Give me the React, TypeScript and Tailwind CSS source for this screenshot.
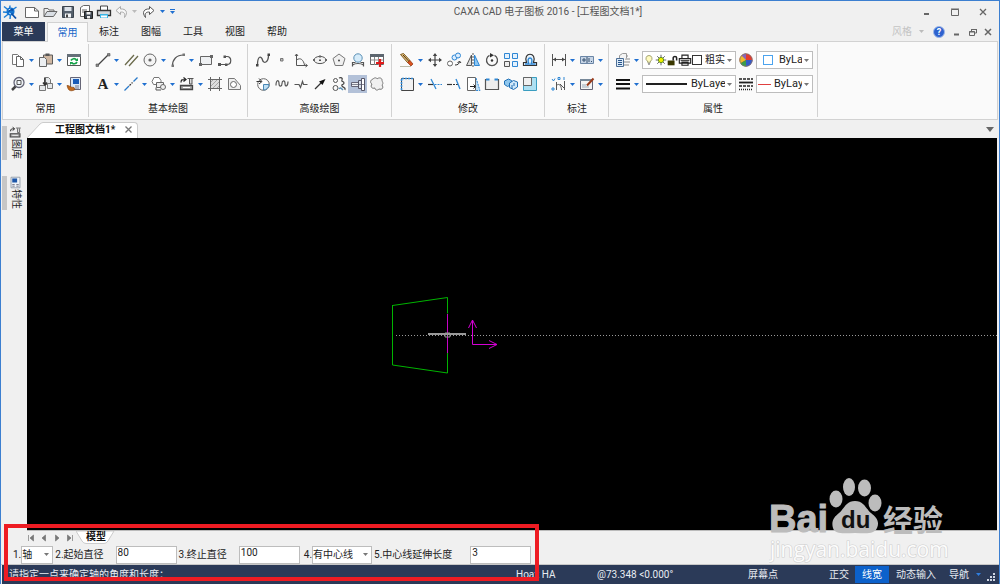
import type { ReactNode } from "react";

const ICONS: Record<string, ReactNode> = {
  // quick access
  logo: (
    <>
      <path d="M2 2.500l5 4M8 1.500l-.5 5M14.500 3l-5 3.500M1 8l6 .5M2 13.500l5-4M8 15l.5-5" stroke="#1c7fd8" strokeWidth="1.500" />
      <circle cx="8.500" cy="7.500" r="4" fill="#1374d0" />
      <path d="M7 7.500c0-2 3-2.500 4-1M9.500 9.500l4.500 5" stroke="#0a4fa8" strokeWidth="1.800" />
      <path d="M6.500 6l2-1M7 9l2 1" stroke="#bfe2ff" />
    </>
  ),
  newFile: <path d="M1.500 3.500h9l4 3.500v6.500h-13zM10.500 3.500v3.500h4" fill="#fff" stroke="#666" />,
  open: (
    <>
      <path d="M2 12.500v-8h4l1 1.500h5v2" fill="#eee" stroke="#666" />
      <path d="M2 12.500l3-5h10l-3.500 5z" fill="#d9dee4" stroke="#666" />
    </>
  ),
  save: (
    <>
      <path d="M2.500 2.500h11v11h-11z" fill="#55606c" stroke="#3b444e" />
      <path d="M4.500 3h7v4h-7z" fill="#dde3ea" />
      <path d="M5 9.500h6v4H5z" fill="#f5f7f9" />
      <path d="M6 10.500h2v3H6z" fill="#444" />
    </>
  ),
  saveAs: (
    <>
      <path d="M2.500 3.500l3-2h6v11h-9zM4 6h5M4 8h3" fill="#fff" stroke="#666" />
      <path d="M6.500 7.500h8v7h-8z" fill="#3e4650" stroke="#222" />
      <path d="M8.500 8h4v2.500h-4zM9 12h3v2.500H9z" fill="#eee" />
    </>
  ),
  print: (
    <>
      <path d="M4.500 6V2h7v4" fill="#fff" stroke="#444" />
      <path d="M1.500 6.500h13v5h-13z" fill="#d4d8dc" stroke="#333" strokeWidth="1.300" />
      <path d="M4 10h8v4H4z" fill="#39b5e6" />
      <path d="M5 11.500h6v2H5z" fill="#fff" />
    </>
  ),
  printer: (
    <>
      <path d="M4.500 6V2.500h7V6M1.500 6.500h13v5h-13zM4.500 10.500h7v3.500h-7z" fill="#fff" stroke="#222" strokeWidth="1.300" />
      <path d="M3 8.500h10" stroke="#222" />
    </>
  ),
  undo: <path d="M6.500 2.500L2 6.500l4.500 4V8c3 0 5 .5 4 5.500 4-5 1.500-9-4-8.500z" fill="#f6f6f6" stroke="#aaa" />,
  redo: <path d="M9.500 2.500l4.500 4-4.500 4V8c-3 0-5 .5-4 5.500-4-5-1.500-9 4-8.500z" fill="#fff" stroke="#555" />,
  // common
  copy: (
    <>
      <path d="M2.500 2.500h5l2 2v8h-7z" fill="#fff" stroke="#777" />
      <path d="M6.500 4.500h4l3 3v7h-7zM10.500 4.500v3h3" fill="#fff" stroke="#666" />
    </>
  ),
  paste: (
    <>
      <path d="M5.500 3h9v9h-9z" fill="#cfb7a2" stroke="#5b5b5b" />
      <path d="M7.500 1.500h4v2.500h-4z" fill="#555" />
      <path d="M1.500 5.500h5l2 2v7h-7z" fill="#eceff2" stroke="#666" />
    </>
  ),
  refresh: (
    <>
      <path d="M1.500 2.500h13v11h-13z" fill="#fff" stroke="#555" />
      <path d="M1 2h14v3H1z" fill="#667079" />
      <path d="M5 8.500c1-2 4-2.500 5.500-.5M11 10c-1 2-4 2.500-5.500.5" stroke="#17a34a" strokeWidth="1.700" />
      <path d="M12 6v3H9zM4 13v-3h3z" fill="#17a34a" />
    </>
  ),
  zoom: (
    <>
      <circle cx="9" cy="6.500" r="5" fill="#f1f5f8" stroke="#667" strokeWidth="1.300" />
      <path d="M7 4.500h4v4H7z" stroke="#555" />
      <path d="M5.500 10.500L2 14" stroke="#444" strokeWidth="2.500" />
    </>
  ),
  insert: (
    <>
      <path d="M6.500 1.500h4l2 2v5h-6z" fill="#e5e8ea" stroke="#777" />
      <path d="M9.500 7.500h5v5h-5zM1.500 9.500h6v5h-6z" fill="#e5e8ea" stroke="#777" />
      <path d="M7 2v6M5 6.500l2 2.500 2-2.500" stroke="#333" strokeWidth="1.500" />
    </>
  ),
  matchProp: (
    <>
      <path d="M4.500 1.500h10v12h-10z" fill="#dce9f8" stroke="#667" />
      <path d="M7 3h6v5H7z" fill="#1a5cb8" />
      <path d="M9 10h4M9 12h4" stroke="#778" />
      <path d="M1 9.500c3 0 3 2 7 2l1 2c-3 2-6 1.500-7-1z" fill="#c06a1d" stroke="#8a4510" strokeWidth=".7" />
    </>
  ),
  // basic drawing
  line: (
    <>
      <path d="M2.500 13.500l11-11" stroke="#444" strokeWidth="1.200" />
      <path d="M1 12h2.500v2.500H1zM12.500 1.500H15V4h-2.500z" fill="#888" stroke="#555" strokeWidth=".6" />
    </>
  ),
  parallel: <path d="M2 13L11 3M6 14l9-10" stroke="#6b6b4c" strokeWidth="1.300" />,
  circle: (
    <>
      <circle cx="8" cy="8" r="6" fill="#f4f4f4" stroke="#666" />
      <circle cx="8" cy="8" r="1.600" fill="#666" />
    </>
  ),
  arc: (
    <>
      <path d="M2.500 13.500c0-6 4-10.500 11-10.500" stroke="#555" strokeWidth="1.200" />
      <path d="M1.500 12.500h2.500V15H1.500zM12.500 1.500H15V4h-2.500z" fill="#777" />
    </>
  ),
  rect: (
    <>
      <path d="M2.500 4.500h11v8h-11z" fill="#eef0f2" stroke="#666" />
      <path d="M1 11h3v3H1zM12 3h3v3h-3z" fill="#666" />
    </>
  ),
  polyline: (
    <>
      <path d="M2.500 12.500h7.500c5 0 5-8 0-8H8" stroke="#555" strokeWidth="1.200" />
      <path d="M1 11h3v3H1zM6.500 3.500h2.500V6H6.500zM8 11.500h2.500V14H8z" fill="#555" />
    </>
  ),
  centerLine: (
    <>
      <path d="M1.500 14.500l4.500-4.500M10.500 5.500L14.500 1.500" stroke="#2979c9" strokeWidth="1.300" />
      <path d="M6.500 9.500l3-3" stroke="#333" strokeWidth="1.300" strokeDasharray="2 1" />
    </>
  ),
  block: (
    <>
      <path d="M5.500 8.500h-3l-1.500-3 2-4h5l2 3v2" fill="#fff" stroke="#777" />
      <path d="M5.500 6.500h7v5h-7z" fill="#eee" stroke="#666" />
      <circle cx="12" cy="11" r="2.500" fill="#eee" stroke="#666" />
      <path d="M5 11.500v2.500h5" stroke="#555" />
    </>
  ),
  library: (
    <>
      <path d="M2 6.500c0-3 1-3 4-3M4.500 1.500l2.500 2-2.500 2" stroke="#222" strokeWidth="1.200" />
      <path d="M8.500 2.500h6M10.500 3v5h2.500V3" fill="#ddd" stroke="#555" />
      <path d="M1.500 9.500h12v4h-12z" fill="#aaa" stroke="#444" strokeWidth="1.300" />
      <path d="M4 11.500h7" stroke="#fff" />
    </>
  ),
  hatch: (
    <>
      <path d="M3.500 3.500h9v9h-9z" fill="#dedede" />
      <path d="M3 7l4-4M3 11l8-8M5 13l8-8M9 13l4-4" stroke="#999" strokeWidth=".8" />
      <path d="M3.500 1v14M12.500 1v14M1 3.500h14M1 12.500h14" stroke="#666" />
    </>
  ),
  region: (
    <>
      <path d="M2.500 2.500h6l6 7v4h-12z" fill="#f0f0f0" stroke="#777" />
      <circle cx="7.500" cy="8.500" r="3" fill="#fff" stroke="#666" />
    </>
  ),
  text: (
    <text x="8" y="13" textAnchor="middle" fontFamily="Liberation Serif, serif" fontWeight="bold" fontSize="15" fill="#222">
      A
    </text>
  ),
  // advanced drawing
  spline: (
    <>
      <path d="M2.500 13c0-10 4-9 5-5s6 3 6-5" stroke="#555" strokeWidth="1.300" />
      <path d="M1 12h2.500v2.500H1zM12.500 1.500H15V4h-2.500z" fill="#444" />
    </>
  ),
  point: <path d="M6.500 6.500h2.500v2.500H6.500z" fill="#bbb" stroke="#777" />,
  formula: <path d="M3.500 2v11.500H14M2 4l1.500-2L5 4M12.500 12l2 1.500-2 1.500M3.500 8c4-3 7 0 8 5" stroke="#555" />,
  ellipse: (
    <>
      <ellipse cx="8" cy="8" rx="6" ry="3.600" fill="#f3f3f3" stroke="#555" />
      <path d="M1 7h2v2H1zM13 7h2v2h-2zM7 3.500h2v2H7z" fill="#666" />
      <path d="M7 7.500h2v1.500H7z" fill="#555" />
    </>
  ),
  polygon: (
    <>
      <path d="M8 2l6 4.500-2.200 7H4.200L2 6.500z" fill="#f0f0f0" stroke="#777" />
      <circle cx="8" cy="8.500" r="1" fill="#444" />
    </>
  ),
  magnify: (
    <>
      <circle cx="8" cy="6" r="4.200" fill="#d6ecfa" stroke="#5b90b5" />
      <path d="M2.500 14.500v-4l3 0M13.500 14.500v-4l-3 0M2.500 13c3-2 8-2 11 0" stroke="#555" strokeWidth="1.200" />
    </>
  ),
  table: (
    <>
      <path d="M1.500 2.500h13v10h-13z" fill="#fff" stroke="#666" />
      <path d="M1 2h14v3H1z" fill="#5d666f" />
      <path d="M1.500 8h13M5.500 5v8M9.500 5v8" stroke="#888" />
      <path d="M11 7v8M7 11h8" stroke="#e01b1b" strokeWidth="2.200" />
    </>
  ),
  copyArc: (
    <>
      <circle cx="8.500" cy="8.500" r="5.800" fill="#fff" stroke="#666" />
      <path d="M8.500 8.500h5.500c0 3-2.500 5.500-5.500 5.500z" fill="#bfe0f5" stroke="#4a88b5" />
      <path d="M1.500 5.500h5M4 2.500l3 3-3 2.500" stroke="#333" />
    </>
  ),
  wave: <path d="M2 9.500c0-6 3-6 3-2s3 3 3 0 3-4 3 0 3 3 3-2" stroke="#555" strokeWidth="1.200" />,
  breakLine: <path d="M1.500 8.500H6l1.500 3 2-6 1 3h4" stroke="#555" strokeWidth="1.200" />,
  arrow: (
    <>
      <path d="M3 13l6-6" stroke="#333" strokeWidth="1.200" />
      <path d="M13.500 3L7 5.500 10.500 9z" fill="#111" />
    </>
  ),
  gear: (
    <>
      <circle cx="4.500" cy="4.500" r="2" stroke="#555" />
      <circle cx="4.500" cy="12" r="2.500" stroke="#555" />
      <path d="M8 2c2-1 4 0 3 2s2 1 2 3-3 1-2 3 4 1 3 4" stroke="#444" strokeWidth="1.200" />
      <path d="M8 13c1-2 2-1 4 1" stroke="#5b90b5" strokeWidth="1.500" />
    </>
  ),
  shaft: (
    <>
      <path d="M1.500 6.500h7v4h-7z" fill="#eef1f4" stroke="#667" />
      <path d="M8.500 4.500h3v8h-3z" fill="#d5dde7" stroke="#556" />
      <path d="M11.500 2.500h3v12h-3z" fill="#fff" stroke="#556" />
      <path d="M1 8.500h14" stroke="#556" strokeWidth=".7" />
    </>
  ),
  cloud: <path d="M4 3c2-2 4-1 4 0 2-2 5-1 5 1s2 3 0 5c2 3 0 5-3 4-2 2-4 1-4-1-3 1-5-1-3-4-2-1-2-4 1-5z" fill="#f0f0f0" stroke="#777" />,
  // modify
  erase: (
    <>
      <path d="M1.500 2.500l3-1 6.500 7-2.500 2z" fill="#e7c27c" stroke="#7c5a22" />
      <path d="M4 3l6 6.500" stroke="#4b3210" />
      <path d="M8.500 10.500l2.500-2 3 3.500-2 2z" fill="#d9531e" stroke="#8f300b" strokeWidth=".7" />
      <path d="M1 14.500h11" stroke="#bba" />
    </>
  ),
  move: (
    <>
      <path d="M8 2v12M2 8h12" stroke="#444" strokeWidth="1.200" />
      <path d="M8 1l2.200 3H5.800zM8 15l2.200-3H5.800zM1 8l3-2.200v4.400zM15 8l-3-2.200v4.400z" fill="#444" />
    </>
  ),
  copyMove: (
    <>
      <circle cx="4" cy="11.500" r="2.500" fill="#fff" stroke="#666" />
      <circle cx="8.500" cy="5.500" r="2.500" fill="#dceeff" stroke="#2f87d4" />
      <circle cx="12" cy="3.500" r="2.500" fill="#dceeff" stroke="#2f87d4" />
      <path d="M9 13c3 0 4-1 4.500-3.500M11.500 11l2-2 1.500 2" stroke="#333" />
    </>
  ),
  mirror: (
    <>
      <path d="M6.500 3v10.500H1.500z" fill="#ddd" stroke="#555" />
      <path d="M9.500 3v10.500h5z" fill="#8cc6f2" stroke="#2f87d4" />
      <path d="M8 1v14" stroke="#555" strokeDasharray="2 1" />
    </>
  ),
  rotate: (
    <>
      <path d="M5.500 3.300a5.500 5.500 0 1 0 5 0" stroke="#555" strokeWidth="1.300" />
      <path d="M6 1v4.500L10 3.300z" fill="#333" />
      <circle cx="8" cy="8.500" r="1.200" fill="#333" />
    </>
  ),
  array: (
    <>
      <path d="M1.500 1.500h5v5h-5zM9.500 1.500h5v5h-5zM9.500 9.500h5v5h-5z" fill="#e4f2fe" stroke="#2f87d4" />
      <path d="M1.500 9.500h5v5h-5z" fill="#eee" stroke="#555" />
    </>
  ),
  offset: (
    <>
      <path d="M1.500 13.500v-3h3c-4-11 11-11 7 0h3v3z" fill="#e8f3fc" stroke="#333" strokeWidth="1.200" />
      <path d="M3 12h4c-4-8 6-8 2 0h4.500" stroke="#2f87d4" strokeWidth="1.400" />
    </>
  ),
  select: (
    <>
      <path d="M2.500 2.500h12v12h-12z" fill="#f2f2f2" stroke="#444" />
      <path d="M2.500 14v-11.500h12" stroke="#2f87d4" strokeWidth="1.600" strokeDasharray="2 1" />
    </>
  ),
  trim: (
    <>
      <path d="M1 8.500h5" stroke="#333" strokeWidth="1.200" />
      <path d="M7.500 8.500H15" stroke="#2f87d4" strokeDasharray="2 1" />
      <path d="M4 3l5 10" stroke="#2f87d4" strokeWidth="1.300" />
    </>
  ),
  extend: (
    <>
      <path d="M1 8.500h5" stroke="#333" strokeWidth="1.200" />
      <path d="M7 8.500h5" stroke="#333" strokeDasharray="2 1" />
      <path d="M10 3l4 10" stroke="#2f87d4" strokeWidth="1.300" />
    </>
  ),
  stretch: (
    <>
      <path d="M2.500 1.500h8v13h-8z" fill="#fff" stroke="#666" />
      <path d="M11 2l4 12.500h-4" fill="#bfe0f8" stroke="#2f87d4" strokeDasharray="2 1" />
      <path d="M5 10.500h5M8.500 8.500l2 2-2 2" stroke="#222" />
    </>
  ),
  breakAt: (
    <>
      <path d="M5 3.500H1.500v10h13v-10H11" fill="#eee" stroke="#555" strokeWidth="1.200" />
      <path d="M2 3.500h3.500M14 3.500h-3.500" stroke="#2f87d4" strokeWidth="2" />
    </>
  ),
  explode: (
    <>
      <path d="M1.500 5l4-2 3 1.500v4l-4 2-3-2z" fill="#8fc7ee" stroke="#1f6fb5" />
      <path d="M6.500 7l4-2.500 4 1.500v5l-4 2.500-4-2z" fill="#cfe7f9" stroke="#1f6fb5" />
      <path d="M9 9v4M11 7v3" stroke="#1f6fb5" />
    </>
  ),
  scale: (
    <>
      <path d="M1.500 1.500h13v13h-13z" fill="#aee0f2" stroke="#3a9dc0" />
      <path d="M1.500 1.500h8v8h-8z" fill="#f0f0f0" stroke="#666" />
    </>
  ),
  // dimension
  dim: (
    <>
      <path d="M1.500 2v12M14.500 2v12M2 7.500h12" stroke="#555" />
      <path d="M2 7.500l3-2v4zM14 7.500l-3-2v4z" fill="#444" />
    </>
  ),
  tolerance: (
    <>
      <path d="M1.500 4.500h13v7h-13z" fill="#c7d5e6" stroke="#6b86a6" />
      <path d="M3 8h4M5 6v4M10 6v4M12 9.500h1M8 5v6" stroke="#34506f" />
    </>
  ),
  coord: (
    <>
      <path d="M5.500 6v8M5.500 9.500c3-3 5 1 5 4.500M13.500 5v9M9 8l4 4" stroke="#555" />
      <path d="M1 3l1.500 2M4 2.500L2.500 5M1 12h2v2H1zM7 1.500h2v2H7zM13 1v3" stroke="#2f87d4" />
    </>
  ),
  editDim: (
    <>
      <path d="M1.500 3.500h12v10h-12z" fill="#f4f4f4" stroke="#667" />
      <path d="M1 3h13v2H1z" fill="#789" />
      <path d="M3 9h4M3 11h7" stroke="#9ab" />
      <path d="M8 9.500l6.500-7" stroke="#9a3b1b" strokeWidth="2" />
    </>
  ),
  // properties
  layer: (
    <>
      <path d="M9 4h4M10 7h5M9 10h6M9 13h5" stroke="#888" strokeWidth="1.200" />
      <path d="M4.500 6.500v-3l3-2h4v5" fill="#f4f4f4" stroke="#999" />
      <path d="M1.500 6.500h7v8h-7z" fill="#dceaf8" stroke="#4d6f96" />
      <path d="M3 8.500h4M3 10.500h4M3 12.500h4" stroke="#27548a" />
    </>
  ),
  weight: <path d="M1 4h14M1 8h14M1 12.500h14" stroke="#111" strokeWidth="2.200" />,
  wheel: (
    <>
      <circle cx="8" cy="8" r="6.500" fill="#e33b2e" />
      <path d="M8 8V1.500A6.500 6.500 0 0 0 2.400 11.200z" fill="#f0b92b" />
      <path d="M8 8l-5.600 3.200a6.500 6.500 0 0 0 5.600 3.300z" fill="#3b9d4a" />
      <path d="M8 8v6.500a6.500 6.500 0 0 0 6.500-6.500z" fill="#3559c8" />
      <path d="M8 8V1.500a6.500 6.500 0 0 0-4.500 2z" fill="#8a63b8" />
      <circle cx="8" cy="8" r="6.200" stroke="#777" strokeWidth=".8" />
    </>
  ),
  linetype: (
    <>
      <path d="M1 3h14M1 10h14" stroke="#222" strokeWidth="1.300" strokeDasharray="3 1" />
      <path d="M1 6.500h14" stroke="#222" strokeWidth="1.800" />
      <path d="M1 13.500h14" stroke="#222" strokeWidth="1.300" strokeDasharray="1 1" />
    </>
  ),
  bulb: (
    <>
      <path d="M8 2a4 4 0 0 0-2 7.500V11h4V9.500A4 4 0 0 0 8 2z" fill="#fffbc0" stroke="#8a8a50" />
      <path d="M6.500 12.500h3M7 14h2" stroke="#666" />
    </>
  ),
  sun: (
    <>
      <path d="M8 1v14M1 8h14M3 3l10 10M13 3L3 13" stroke="#333" />
      <circle cx="8" cy="8" r="3.500" fill="#f3f000" stroke="#3b7a10" />
    </>
  ),
  lock: (
    <>
      <path d="M1 8h10v7H1z" fill="#3a3800" />
      <path d="M9 8V4c0-2.500 5-2.500 5 0v4" stroke="#222" strokeWidth="2.200" />
    </>
  ),
  props: (
    <>
      <path d="M2.500 1.500h11v13h-11z" fill="#eef3f9" stroke="#8892a0" />
      <path d="M4 3h6v5H4z" fill="#1c56a8" />
      <path d="M4 10.500h3M9 10.500h3M4 12.500h3M9 12.500h3" stroke="#667" />
    </>
  ),
};

function Icon({ name, size = 16 }: { name: string; size?: number }) {
  return (
    <svg width={size} height={size} viewBox="0 0 16 16" fill="none" className="shrink-0" aria-hidden="true">
      {ICONS[name]}
    </svg>
  );
}

function Caret({ color = "#1f6fd0" }: { color?: string }) {
  return (
    <svg width="5" height="3" viewBox="0 0 5 3" className="shrink-0" aria-hidden="true">
      <path d="M0 0h5L2.500 3z" fill={color} />
    </svg>
  );
}

type Tool = { icon: string; label: string; drop?: boolean; active?: boolean };

function ToolButton({ icon, label, drop, active }: Tool) {
  return (
    <>
      <button
        type="button"
        title={label}
        aria-label={label}
        className={`flex h-[18px] w-[19px] items-center justify-center ${active ? "bg-[#b3c1d8]" : ""}`}
      >
        <Icon name={icon} />
      </button>
      {drop && (
        <button type="button" aria-label={`${label} ▾`} className="flex h-[18px] w-[9px] items-center justify-center">
          <Caret />
        </button>
      )}
    </>
  );
}

const GROUPS: { title: string; className: string; rows: Tool[][] }[] = [
  {
    title: "常用",
    className: "px-[5px]",
    rows: [
      [
        { icon: "copy", label: "复制", drop: true },
        { icon: "paste", label: "粘贴", drop: true },
        { icon: "refresh", label: "刷新" },
      ],
      [
        { icon: "zoom", label: "显示", drop: true },
        { icon: "insert", label: "插入", drop: true },
        { icon: "matchProp", label: "特性匹配" },
      ],
    ],
  },
  {
    title: "基本绘图",
    className: "px-1",
    rows: [
      [
        { icon: "line", label: "直线", drop: true },
        { icon: "parallel", label: "平行线" },
        { icon: "circle", label: "圆", drop: true },
        { icon: "arc", label: "圆弧", drop: true },
        { icon: "rect", label: "矩形" },
        { icon: "polyline", label: "多段线" },
      ],
      [
        { icon: "text", label: "文字", drop: true },
        { icon: "centerLine", label: "中心线", drop: true },
        { icon: "block", label: "块", drop: true },
        { icon: "library", label: "图库", drop: true },
        { icon: "hatch", label: "剖面线" },
        { icon: "region", label: "填充" },
      ],
    ],
  },
  {
    title: "高级绘图",
    className: "px-[5px]",
    rows: [
      [
        { icon: "spline", label: "样条" },
        { icon: "point", label: "点" },
        { icon: "formula", label: "公式曲线" },
        { icon: "ellipse", label: "椭圆" },
        { icon: "polygon", label: "正多边形" },
        { icon: "magnify", label: "局部放大" },
        { icon: "table", label: "表格" },
      ],
      [
        { icon: "copyArc", label: "圆弧拟合" },
        { icon: "wave", label: "波浪线" },
        { icon: "breakLine", label: "双折线" },
        { icon: "arrow", label: "箭头" },
        { icon: "gear", label: "齿形" },
        { icon: "shaft", label: "孔/轴", active: true },
        { icon: "cloud", label: "云线" },
      ],
    ],
  },
  {
    title: "修改",
    className: "px-[5px]",
    rows: [
      [
        { icon: "erase", label: "删除", drop: true },
        { icon: "move", label: "平移" },
        { icon: "copyMove", label: "平移复制" },
        { icon: "mirror", label: "镜像" },
        { icon: "rotate", label: "旋转" },
        { icon: "array", label: "阵列" },
        { icon: "offset", label: "等距线" },
      ],
      [
        { icon: "select", label: "裁剪框", drop: true },
        { icon: "trim", label: "裁剪" },
        { icon: "extend", label: "延伸" },
        { icon: "stretch", label: "拉伸" },
        { icon: "breakAt", label: "打断" },
        { icon: "explode", label: "分解" },
        { icon: "scale", label: "缩放" },
      ],
    ],
  },
  {
    title: "标注",
    className: "pr-[3px] pl-1",
    rows: [
      [
        { icon: "dim", label: "尺寸标注", drop: true },
        { icon: "tolerance", label: "形位公差", drop: true },
      ],
      [
        { icon: "coord", label: "坐标标注", drop: true },
        { icon: "editDim", label: "标注编辑", drop: true },
      ],
    ],
  },
];

const TABS = ["标注", "图幅", "工具", "视图", "帮助"];

function Group({ title, className, children }: { title: string; className: string; children: ReactNode }) {
  return (
    <section className={`my-[2px] flex flex-col border-r border-[#d2d2d2] pt-[7px] ${className}`}>
      <div className="flex flex-col gap-[6px]">{children}</div>
      <h2 className="mt-2 text-center leading-4">{title}</h2>
    </section>
  );
}

function Combo({ label, value, width, children }: { label: string; value: string; width: string; children?: ReactNode }) {
  return (
    <label className={`flex h-[18px] shrink-0 items-center border border-[#bdbdbd] bg-white pr-[3px] ${width}`}>
      {children}
      <select aria-label={label} className="mr-[2px] h-full min-w-0 flex-1 appearance-none overflow-hidden bg-transparent text-clip outline-none">
        <option>{value}</option>
      </select>
      <Caret color="#777" />
    </label>
  );
}

function TitleBar() {
  return (
    <header className="flex h-[21px] items-center pl-px">
      <div className="flex items-center">
        <Icon name="logo" />
        <div className="ml-[6px] flex items-center gap-[2px]">
          {["newFile", "open", "save", "saveAs", "print", "undo"].map((n) => (
            <button key={n} type="button" aria-label={n}>
              <Icon name={n} />
            </button>
          ))}
        </div>
        <span className="mr-[3px] ml-[2px]">
          <Caret color="#bbb" />
        </span>
        <button type="button" aria-label="redo">
          <Icon name="redo" />
        </button>
        <span className="ml-1">
          <Caret />
        </span>
        <button type="button" aria-label="自定义" className="ml-[5px] flex flex-col items-center gap-px">
          <span className="h-px w-[5px] bg-[#1f6fd0]" />
          <Caret />
        </button>
      </div>
      <h1 className="min-w-0 flex-1 truncate text-center text-[#555]">CAXA CAD 电子图板 2016 - [工程图文档1*]</h1>
      <div className="flex items-center gap-4 pr-[10px] text-[#666]">
        <button type="button" aria-label="最小化">
          <svg width="12" height="12" viewBox="0 0 12 12" fill="none" stroke="currentColor">
            <path d="M3 8h5" strokeWidth="2" />
          </svg>
        </button>
        <button type="button" aria-label="最大化">
          <svg width="12" height="12" viewBox="0 0 12 12" fill="none" stroke="currentColor">
            <path d="M2.500 3.500h7v6h-7zM2 3h8" />
          </svg>
        </button>
        <button type="button" aria-label="关闭">
          <svg width="12" height="12" viewBox="0 0 12 12" fill="none" stroke="currentColor">
            <path d="M3 3l6 6M9 3L3 9" strokeWidth="1.300" />
          </svg>
        </button>
      </div>
    </header>
  );
}

function RibbonTabs() {
  return (
    <nav className="flex h-[19px] items-stretch pl-px">
      <button type="button" className="w-[43px] bg-[#2b3a58] text-white">
        菜单
      </button>
      <button type="button" className="relative z-10 -mb-px ml-[2px] w-[41px] border border-b-0 border-[#d2d2d2] bg-[#fafafa] text-[#1565c8]">
        常用
      </button>
      {TABS.map((t) => (
        <button key={t} type="button" className="w-[42px]">
          {t}
        </button>
      ))}
      <div className="ml-auto flex items-center pr-[6px] text-[#666]">
        <span className="text-[#c4c4c4]">风格</span>
        <span className="mr-[9px] ml-[7px]">
          <Caret color="#bbb" />
        </span>
        <button type="button" aria-label="帮助">
          <svg width="12" height="12" viewBox="0 0 12 12">
            <circle cx="6" cy="6" r="5.500" fill="#2d62cf" stroke="#9db7e6" />
            <text x="6" y="9" textAnchor="middle" fontSize="9" fontWeight="bold" fill="#fff">
              ?
            </text>
          </svg>
        </button>
        <svg width="10" height="10" viewBox="0 0 10 10" fill="none" stroke="currentColor" className="ml-[7px]">
          <path d="M2 7.500h5" strokeWidth="2" />
        </svg>
        <svg width="10" height="10" viewBox="0 0 10 10" fill="none" stroke="currentColor" className="ml-[6px]">
          <path d="M3.500 4V2.500h5v3.500H7M1.500 4.500h5v4h-5zM1 5h6M3 2.500h6" />
        </svg>
        <svg width="10" height="10" viewBox="0 0 10 10" fill="none" stroke="currentColor" className="ml-[5px]">
          <path d="M2 2l6 6M8 2L2 8" strokeWidth="1.500" />
        </svg>
      </div>
    </nav>
  );
}

function Ribbon() {
  return (
    <div className="mx-px flex h-[79px] border border-[#d2d2d2] bg-[#fafafa]">
      {GROUPS.map((g) => (
        <Group key={g.title} title={g.title} className={g.className}>
          {g.rows.map((row, i) => (
            <div key={i} className="flex">
              {row.map((t) => (
                <ToolButton key={t.icon} {...t} />
              ))}
            </div>
          ))}
        </Group>
      ))}
      <Group title="属性" className="px-1">
        <div className="flex">
          <ToolButton icon="layer" label="图层" drop />
          <Combo label="图层" value="粗实线层" width="ml-px w-[94px]">
            <Icon name="bulb" size={12} />
            <Icon name="sun" size={12} />
            <Icon name="lock" size={11} />
            <Icon name="printer" size={14} />
            <span className="mr-[3px] size-[10px] shrink-0 border border-[#333] bg-white" />
          </Combo>
          <ToolButton icon="wheel" label="颜色" />
          <Combo label="颜色" value="ByLayer" width="ml-px w-[57px] text-[11px]">
            <span className="mr-[6px] ml-[6px] size-[10px] shrink-0 border border-[#4ba3ee] bg-white" />
          </Combo>
        </div>
        <div className="flex">
          <ToolButton icon="weight" label="线宽" drop />
          <Combo label="线宽" value="ByLayer" width="ml-px w-[94px] text-[11px]">
            <span className="mr-1 ml-[3px] h-[2px] w-[41px] shrink-0 bg-[#222]" />
          </Combo>
          <ToolButton icon="linetype" label="线型" />
          <Combo label="线型" value="ByLayer" width="ml-px w-[57px] text-[11px]">
            <span className="mr-[3px] ml-px h-px w-[13px] shrink-0 bg-[#e04040]" />
          </Combo>
        </div>
      </Group>
    </div>
  );
}

function SidePanel({ icon, label }: { icon: string; label: string }) {
  return (
    <button type="button" className="flex h-[34px] gap-[2px]">
      <span className="h-full w-[5px] bg-[#c6c6c6]" />
      <span className="flex flex-col items-center">
        <Icon name={icon} size={13} />
        <span className="leading-3 [text-orientation:sideways] [writing-mode:vertical-rl]">{label}</span>
      </span>
    </button>
  );
}

function Drawing() {
  return (
    <svg className="block h-full w-full" fill="none" aria-label="绘图区">
      <path d="M365.500 167.500l55-8v16M365.500 167v60l55 8v-20" stroke="#00b400" />
      <path d="M420.500 176v39" stroke="#c800c8" />
      <line x1="369" y1="197.500" x2="100%" y2="197.500" stroke="#999" strokeDasharray="1 2" />
      <path d="M401 196h38" stroke="#999" strokeWidth="2" />
      <path d="M418 195h5v4h-5z" stroke="#999" />
      <path d="M445.500 182v24.500H470M441.500 190l4-8 4 8M462 202.500l8 4-8 4" stroke="#d400d4" />
    </svg>
  );
}

function Field({ id, label, value, gap }: { id: string; label: string; value: string; gap: string }) {
  return (
    <>
      <label htmlFor={id} className="ml-[2px] shrink-0">
        {label}
      </label>
      <input id={id} defaultValue={value} className={`h-[18px] w-[61px] border border-[#bdbdbd] bg-white px-px pb-1 outline-none ${gap}`} />
    </>
  );
}

function Watermark() {
  return (
    <svg width="182" height="90" viewBox="0 0 182 90" className="pointer-events-none absolute right-[48px] bottom-[17px]" aria-hidden="true">
      <g fill="#bcbcbc" fontFamily="Liberation Sans, Noto Sans CJK SC, sans-serif" fontWeight="bold">
        <text x="0" y="55" fontSize="38" stroke="#bcbcbc">
          Bai
        </text>
        <ellipse cx="67" cy="22" rx="6.500" ry="8.500" />
        <ellipse cx="80" cy="10" rx="6" ry="9" />
        <ellipse cx="95.500" cy="11" rx="6.500" ry="8.500" />
        <ellipse cx="106" cy="26" rx="6.500" ry="8.500" />
        <path d="M86 24c9 0 11 8 16 12s9 8 6 15-12 5-22 5-20 2-22-5 1-11 6-15 7-12 16-12z" />
        <text x="72" y="51" fontSize="24" fill="#111">
          du
        </text>
        <text x="114" y="54" fontSize="30">
          经验
        </text>
      </g>
      <text x="1" y="80" fontSize="21" fontFamily="Open Sans, sans-serif" fill="#fcfcfc" stroke="#cfcfcf" strokeWidth="1.200" paintOrder="stroke">
        jingyan.baidu.com
      </text>
    </svg>
  );
}

export default function App() {
  return (
    <div className="relative flex h-screen flex-col overflow-hidden border-x border-t border-[#3c7fd0] bg-[#f0f0f0] font-['Roboto','Noto_Sans_CJK_SC',sans-serif] text-[10px] leading-4 text-[#222]">
      <TitleBar />
      <RibbonTabs />
      <Ribbon />

      <main className="flex min-h-0 flex-1 pr-[2px]">
        <aside className="flex w-[26px] shrink-0 flex-col gap-4 pt-[6px] pl-px">
          <SidePanel icon="library" label="图库" />
          <SidePanel icon="props" label="特性" />
        </aside>
        <div className="flex min-w-0 flex-1 flex-col">
          <div className="flex h-[18px] items-end">
            <svg width="16" height="16" viewBox="0 0 16 16" aria-hidden="true">
              <path d="M0 16L13 2q2-1.500 3-1.500V16z" fill="#fff" />
              <path d="M0 16L13 2q2-1.500 3-1.500" fill="none" stroke="#ccc" />
            </svg>
            <div className="flex h-4 items-center rounded-tr-sm border-t border-r border-[#ccc] bg-white pr-1 pb-[2px] pl-3">
              <span className="font-bold text-[#111]">工程图文档1*</span>
              <button type="button" aria-label="关闭文档" className="ml-[9px]">
                <svg width="9" height="9" viewBox="0 0 9 9" stroke="#777" strokeWidth="1.300">
                  <path d="M1.500 1.500l6 6M7.500 1.500l-6 6" />
                </svg>
              </button>
            </div>
            <button type="button" aria-label="文档列表" className="mr-[3px] mb-[6px] ml-auto">
              <svg width="8" height="5" viewBox="0 0 8 5">
                <path d="M0 0h8L4 5z" fill="#666" />
              </svg>
            </button>
          </div>
          <div className="min-h-0 flex-1 bg-black">
            <Drawing />
          </div>
          <div className="flex h-[15px] items-start border-t border-[#bbb]">
            <div className="flex h-[14px] items-center gap-[5px]">
              {["M1.500 1v6M6.500 1v6L3 4z", "M5.500 1v6L2 4z", "M2.500 1v6L6 4z", "M6.500 1v6M1.500 1v6L5 4z"].map((d) => (
                <button key={d} type="button" aria-label="布局">
                  <svg width="8" height="8" viewBox="0 0 8 8" fill="#777" stroke="#777" strokeWidth=".7">
                    <path d={d} />
                  </svg>
                </button>
              ))}
            </div>
            <div className="ml-[2px] grid">
              <svg width="40" height="13" viewBox="0 0 40 13" className="col-start-1 row-start-1" aria-hidden="true">
                <path d="M0 0l6 10q1.500 2.500 4 2.500h18q2.500 0 4-2.500l6-10z" fill="#fff" stroke="#ccc" />
              </svg>
              <span className="col-start-1 row-start-1 text-center leading-3 font-bold text-[#111]">模型</span>
            </div>
          </div>
        </div>
      </main>

      <form className="flex h-5 shrink-0 items-center border-b border-[#c8c8c8] pl-3" onSubmit={(e) => e.preventDefault()}>
        <span>1.</span>
        <Combo label="1." value="轴" width="w-8" />
        <Field id="start" label="2.起始直径" value="80" gap="ml-3" />
        <Field id="end" label="3.终止直径" value="100" gap="ml-3" />
        <span className="ml-1">4.</span>
        <Combo label="4." value="有中心线" width="w-[60px]" />
        <Field id="ext" label="5.中心线延伸长度" value="3" gap="ml-[18px]" />
      </form>

      <footer className="ml-px flex h-[19px] shrink-0 items-center bg-[#2b3a58] pl-[7px] text-[#e8ecf2]">
        <span className="w-[507px] shrink-0">请指定一点来确定轴的角度和长度：</span>
        <span className="w-[81px] shrink-0">Hoax HA</span>
        <span>@73.348 &lt;0.000°</span>
        <span className="mr-[51px] ml-auto">屏幕点</span>
        <button type="button">正交</button>
        <button type="button" className="ml-[6px] h-[17px] w-[34px] bg-[#0c61cb] text-white">
          线宽
        </button>
        <button type="button" className="ml-[7px]">
          动态输入
        </button>
        <button type="button" className="ml-[13px] flex items-center gap-[7px]">
          导航
          <Caret color="#2f7fe0" />
        </button>
        <svg width="8" height="8" viewBox="0 0 8 8" fill="#cfd6e2" className="mt-1 mr-1 ml-[6px]" aria-hidden="true">
          <path d="M6 0h2v2H6zM3 3h2v2H3zM6 3h2v2H6zM0 6h2v2H0zM3 6h2v2H3zM6 6h2v2H6z" />
        </svg>
      </footer>

      <Watermark />
      <div className="pointer-events-none absolute bottom-[3px] left-[3px] h-[57px] w-[535px] border-4 border-[#ee1c23]" />
    </div>
  );
}
